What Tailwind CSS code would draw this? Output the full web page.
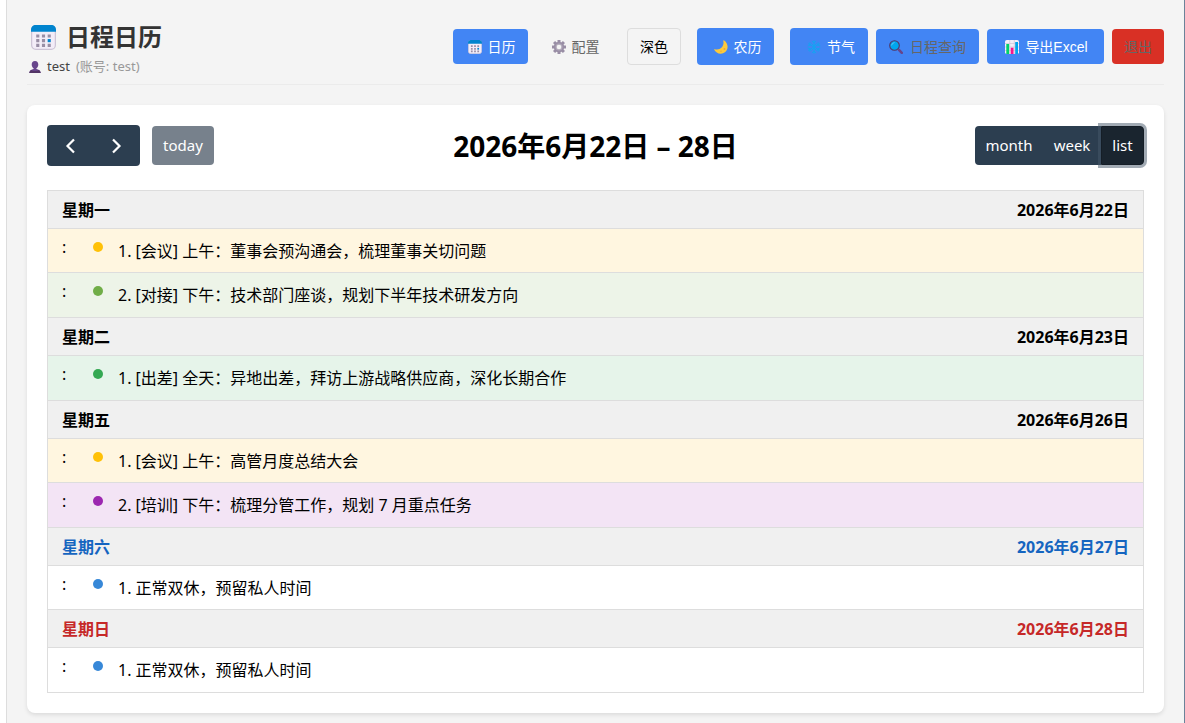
<!DOCTYPE html>
<html lang="zh-CN">
<head>
<meta charset="utf-8">
<meta name="viewport" content="width=device-width, initial-scale=1">
<title>日程日历</title>
<script src="https://cdn.jsdelivr.net/npm/@tailwindcss/browser@4"></script>
</head>
<body class="min-h-screen bg-white pl-1.5 font-['Noto_Sans','Noto_Sans_CJK_SC',sans-serif] text-black">
<svg class="hidden" aria-hidden="true">
  <symbol id="calendar" viewBox="0 0 24 24">
    <rect x=".6" y=".6" width="22.8" height="22.8" rx="4" fill="#f3edf8" stroke="#cdc4d6" stroke-width="1.2"/>
    <path d="M0 6.5V4.5C0 2 2 0 4.500 0h15C22 0 24 2 24 4.500v2z" fill="#0084ce"/>
    <g fill="#998ea5"><path d="M5 9h3v3H5zM10.500 9h3v3h-3zM16 9h3v3h-3zM5 13.500h3v3H5zM10.500 13.500h3v3h-3zM5 18h3v3H5zM10.500 18h3v3h-3zM16 18h3v3h-3z"/></g>
    <path d="M16 13.500h3v3h-3z" fill="#0084ce"/>
  </symbol>
</svg>
<div class="min-h-screen border-x border-l-[#dddddd] border-r-[#6b8299] bg-[#f4f4f4] px-5 pt-5 pb-2.5">
  <header class="flex items-start justify-between border-b border-[#ebebeb] pb-[7px]">
    <div class="pt-px">
      <h1 class="flex h-8 items-center gap-2.5 pl-1 text-2xl font-bold text-[#333]">
        <svg class="size-[25px]" aria-hidden="true"><use href="#calendar"/></svg>
        <span>日程日历</span>
      </h1>
      <p class="mt-1 flex h-5 items-center pl-0.5 text-[13px] text-[#444]">
        <svg class="size-3" viewBox="0 0 12 12" aria-hidden="true"><path d="M6 0C3.800 0 2.700 1.600 2.700 3.500c0 1.700.8 3.100 1.900 3.800v.7C2.300 8.500.5 9.500.3 12h11.400c-.2-2.500-2-3.500-4.300-4v-.7c1.100-.7 1.900-2.100 1.900-3.800C9.300 1.600 8.200 0 6 0z" fill="#67458b"/><path d="M.3 12c.1-1.400.8-2.400 1.800-3 2 1.300 5.800 1.300 7.800 0 1 .6 1.700 1.600 1.800 3z" fill="#533566"/></svg>
        <span class="ml-1.5">test</span>
        <span class="ml-1.5 text-[#999]">(账号: test)</span>
      </p>
    </div>
    <nav class="mt-2 flex h-[37px] items-center gap-2 font-['Liberation_Sans','Noto_Sans_CJK_SC',sans-serif] text-sm">
      <button class="flex h-[35px] w-[75px] items-center justify-center gap-1.5 rounded bg-[#4285f4] pl-0.5 text-white">
        <svg class="size-3.5" aria-hidden="true"><use href="#calendar"/></svg>日历
      </button>
      <button class="flex h-[35px] w-[75px] items-center justify-center gap-1.5 rounded pl-1 text-[#666]">
        <svg class="size-3.5" viewBox="0 0 14 14" aria-hidden="true"><g stroke="#998ea5" stroke-width="3"><path d="M7 0v14M0 7h14M2.050 2.050l9.900 9.900M11.950 2.050l-9.900 9.900"/></g><circle cx="7" cy="7" r="5.200" fill="#998ea5"/><circle cx="7" cy="7" r="3.500" fill="#b4acbc"/><circle cx="7" cy="7" r="2.300" fill="#f4f4f4"/></svg>配置
      </button>
      <button class="mx-2 h-[37px] w-[54px] rounded border border-[#ddd]">深色</button>
      <button class="flex h-[37px] w-[77px] items-center justify-center gap-1.5 rounded bg-[#4285f4] pl-1 text-white">
        <svg class="size-3.5" viewBox="0 0 14 14" aria-hidden="true"><path d="M10.200.4c5 3.600 4.200 10.500-.6 12.700C5.800 14.800 1.800 13 .2 9.800c-.2-.5.200-.8.700-.6C6.500 10.600 10.500 6 9.300 1c-.1-.6.4-.9.900-.6z" fill="#fcc93c"/><g fill="#e8a83c"><circle cx="10.500" cy="9" r="1"/><circle cx="7" cy="11.300" r=".7"/></g></svg>农历
      </button>
      <button class="ml-2 flex h-[37px] w-[78px] items-center justify-center gap-1.5 rounded bg-[#4285f4] pl-1 text-white">
        <svg class="size-3.5" viewBox="0 0 14 14" fill="none" stroke="#13a4f2" stroke-width="1" aria-hidden="true"><path d="M7 .3v13.400M1.200 3.650l11.600 6.700M1.200 10.350l11.600-6.700M5 1l2 2 2-2M5 13l2-2 2 2M4.500 3.500L7 6l2.500-2.500M4.500 10.500L7 8l2.500 2.500M.7 6l2.700-.8L2.700 2.400M13.300 6l-2.700-.8.7-2.800M.7 8l2.700.8-.7 2.800M13.300 8l-2.700.8.7 2.800"/></svg>节气
      </button>
      <button class="flex h-[35px] w-[103px] items-center justify-center gap-[7px] rounded bg-[#4285f4] text-[#666]">
        <svg class="size-3.5" viewBox="0 0 14 14" aria-hidden="true"><path d="M8.800 8.800l1.200 1.200" stroke="#998ea5" stroke-width="1.500"/><path d="M10.200 10.200l2.600 2.600" stroke="#67458b" stroke-width="2.600" stroke-linecap="round"/><circle cx="5.500" cy="5.500" r="4.800" fill="#00a6ed" stroke="#533566" stroke-width="1.100"/><path d="M2.600 5a3 3 0 0 1 2.500-2.400" fill="none" stroke="#5cc7f5" stroke-linecap="round"/></svg>日程查询
      </button>
      <button class="flex h-[35px] w-[117px] items-center justify-center gap-1.5 rounded bg-[#4285f4] pl-0.5 text-white">
        <svg class="size-3.5" viewBox="0 0 14 14" aria-hidden="true"><rect width="14" height="14" rx="1.800" fill="#f3eef8"/><path d="M0 3.500h14M0 7h14M0 10.500h14M4.700 0v14M9.300 0v14" stroke="#cdc4d6" stroke-width=".7"/><path d="M1.300 4h2.800v10H1.300z" fill="#00d26a"/><path d="M5.700 7.700h2.800V14H5.700z" fill="#f8148c"/><path d="M10.200 2H13v12h-2.800z" fill="#00a6ed"/></svg>导出Excel
      </button>
      <button class="h-[35px] w-[52px] rounded bg-[#d93025] text-[#666]">退出</button>
    </nav>
  </header>

  <main class="mt-5 rounded-lg bg-white p-5 shadow-[0_2px_4px_rgba(0,0,0,0.1)]">
    <div class="mb-6 flex h-[41px] items-center justify-between">
      <div class="flex flex-1 items-center gap-3">
        <div class="flex h-[41px] rounded bg-[#2c3e50] text-white">
          <button class="flex w-[46px] items-center justify-center" aria-label="prev"><svg class="h-4 w-3" viewBox="0 0 12 16" fill="none" stroke="currentColor" stroke-width="2.200" aria-hidden="true"><path d="M10 1.500L3.500 8l6.500 6.500"/></svg></button>
          <button class="flex w-[47px] items-center justify-center" aria-label="next"><svg class="h-4 w-3" viewBox="0 0 12 16" fill="none" stroke="currentColor" stroke-width="2.200" aria-hidden="true"><path d="M2 1.500L8.500 8 2 14.500"/></svg></button>
        </div>
        <button class="h-[39px] w-[62px] rounded bg-[#77818c] text-[15px] text-white" disabled>today</button>
      </div>
      <h2 class="text-[28px] leading-10 font-bold whitespace-nowrap">2026年6月22日 – 28日</h2>
      <div class="flex flex-1 justify-end text-[15px] text-white">
        <button class="h-[39px] w-[68px] rounded-l bg-[#2c3e50]">month</button>
        <button class="h-[39px] w-[58px] bg-[#2c3e50]">week</button>
        <button class="h-[39px] w-[43px] rounded-r border border-[#151e27] bg-[#1a252f] ring-3 ring-[#46586a]/50" aria-pressed="true">list</button>
      </div>
    </div>

    <table class="w-full border-separate border-spacing-0 border-x border-b border-[#ddd] text-base [&_td]:border-t [&_td]:border-[#ddd] [&_td]:p-0 [&_td]:align-top [&_th]:border-t [&_th]:border-[#ddd] [&_th]:bg-[#f0f0f0] [&_th]:px-3.5 [&_th]:py-0 [&_th]:leading-6">
      <tbody>
        <tr class="h-[38px]"><th colspan="3" scope="colgroup"><div class="flex justify-between"><span>星期一</span><span>2026年6月22日</span></div></th></tr>
        <tr class="h-11 bg-[#fff6e0]"><td class="w-[45px]"><div class="pt-2 pl-3.5 leading-5">:</div></td><td class="w-[25px]"><div class="mt-[13px] size-2.5 rounded-full bg-[#ffc107]"></div></td><td><div class="pt-2.5 leading-6">1. [会议] 上午：董事会预沟通会，梳理董事关切问题</div></td></tr>
        <tr class="h-[45px] bg-[#edf4e8]"><td><div class="pt-2 pl-3.5 leading-5">:</div></td><td><div class="mt-[13px] size-2.5 rounded-full bg-[#70ad47]"></div></td><td><div class="pt-2.5 leading-6">2. [对接] 下午：技术部门座谈，规划下半年技术研发方向</div></td></tr>
        <tr class="h-[38px]"><th colspan="3" scope="colgroup"><div class="flex justify-between"><span>星期二</span><span>2026年6月23日</span></div></th></tr>
        <tr class="h-[45px] bg-[#e6f4ea]"><td><div class="pt-2 pl-3.5 leading-5">:</div></td><td><div class="mt-[13px] size-2.5 rounded-full bg-[#34a853]"></div></td><td><div class="pt-2.5 leading-6">1. [出差] 全天：异地出差，拜访上游战略供应商，深化长期合作</div></td></tr>
        <tr class="h-[38px]"><th colspan="3" scope="colgroup"><div class="flex justify-between"><span>星期五</span><span>2026年6月26日</span></div></th></tr>
        <tr class="h-11 bg-[#fff6e0]"><td><div class="pt-2 pl-3.5 leading-5">:</div></td><td><div class="mt-[13px] size-2.5 rounded-full bg-[#ffc107]"></div></td><td><div class="pt-2.5 leading-6">1. [会议] 上午：高管月度总结大会</div></td></tr>
        <tr class="h-[45px] bg-[#f3e4f5]"><td><div class="pt-2 pl-3.5 leading-5">:</div></td><td><div class="mt-[13px] size-2.5 rounded-full bg-[#9c27b0]"></div></td><td><div class="pt-2.5 leading-6">2. [培训] 下午：梳理分管工作，规划 7 月重点任务</div></td></tr>
        <tr class="h-[38px] text-[#1565c0]"><th colspan="3" scope="colgroup"><div class="flex justify-between"><span>星期六</span><span>2026年6月27日</span></div></th></tr>
        <tr class="h-11"><td><div class="pt-2 pl-3.5 leading-5">:</div></td><td><div class="mt-[13px] size-2.5 rounded-full bg-[#3788d8]"></div></td><td><div class="pt-2.5 leading-6">1. 正常双休，预留私人时间</div></td></tr>
        <tr class="h-[38px] text-[#c62828]"><th colspan="3" scope="colgroup"><div class="flex justify-between"><span>星期日</span><span>2026年6月28日</span></div></th></tr>
        <tr class="h-[45px]"><td><div class="pt-2 pl-3.5 leading-5">:</div></td><td><div class="mt-[13px] size-2.5 rounded-full bg-[#3788d8]"></div></td><td><div class="pt-2.5 leading-6">1. 正常双休，预留私人时间</div></td></tr>
      </tbody>
    </table>
  </main>
</div>
</body>
</html>
